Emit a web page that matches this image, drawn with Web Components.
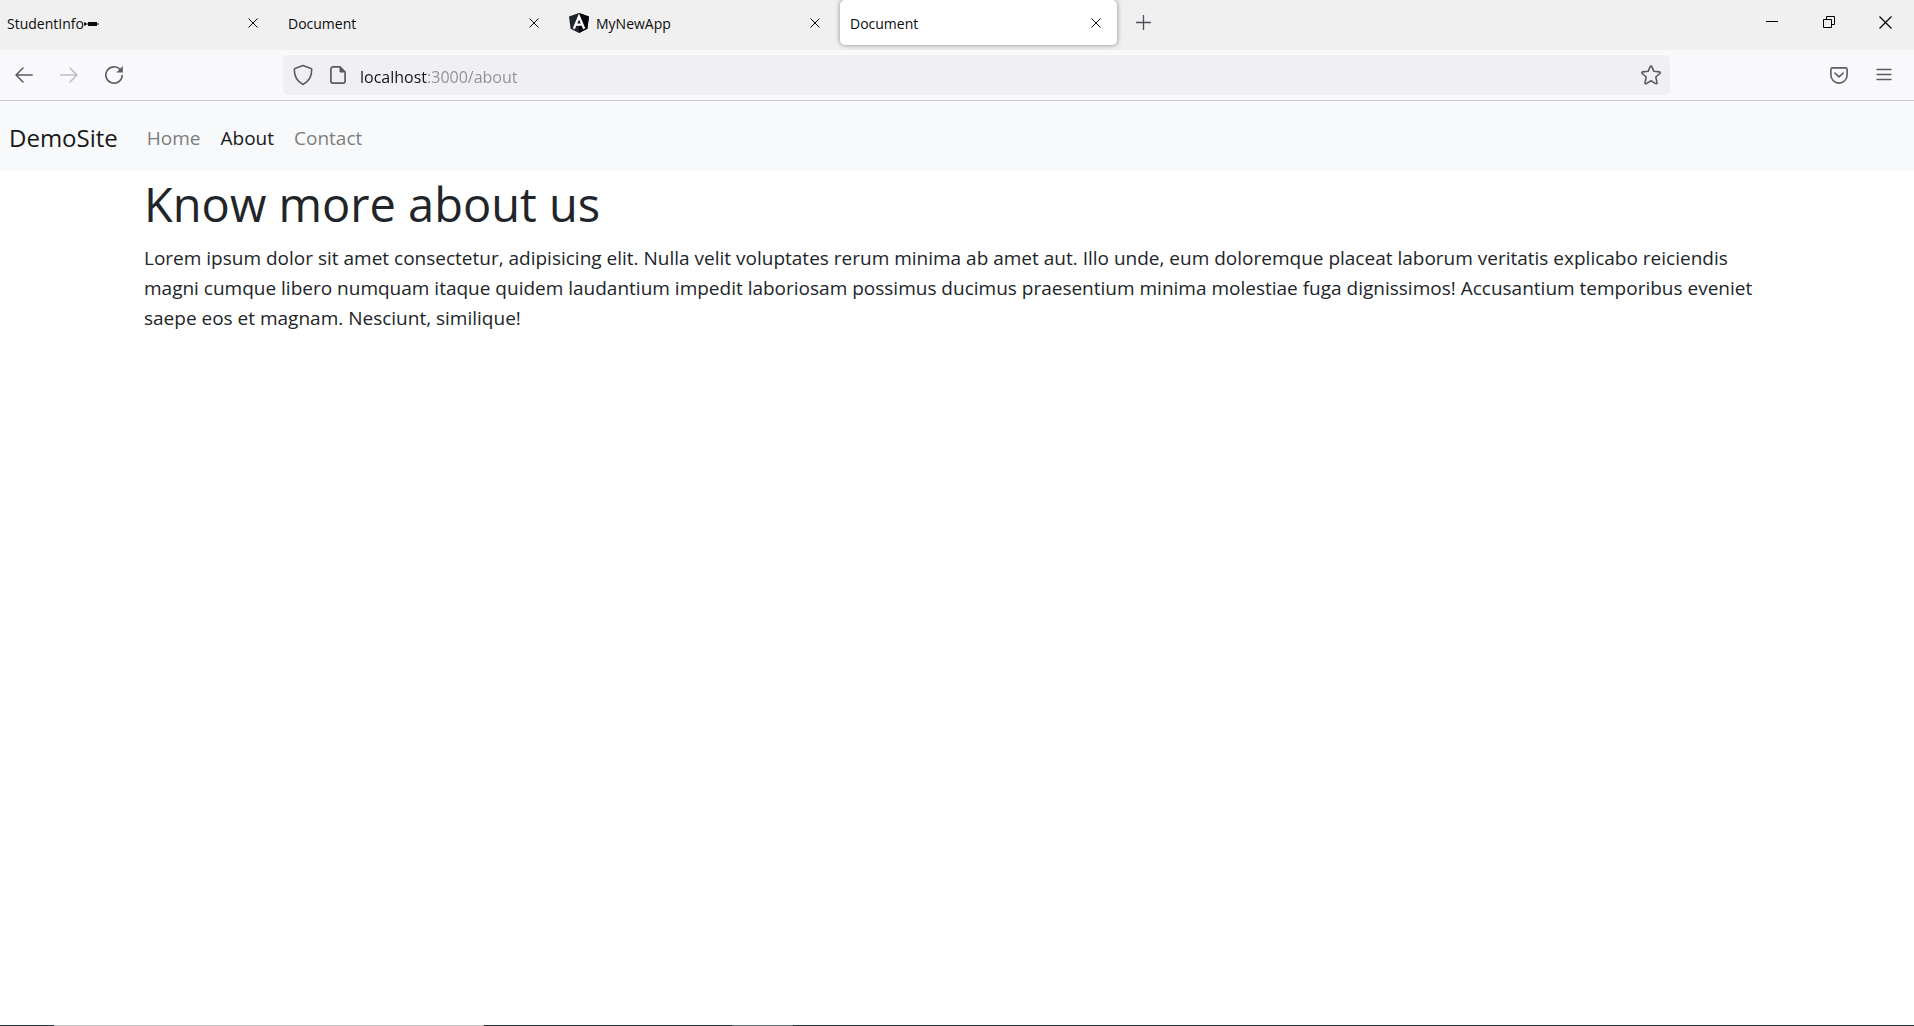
<!DOCTYPE html>
<html lang="en">
<head>
<meta charset="utf-8">
<meta name="viewport" content="width=device-width, initial-scale=1">
<title>Document</title>
<style>
  html, body { margin: 0; }
  body { font-family: "Open Sans", "Noto Sans", sans-serif; background: #fff; color: #212529; }
</style>
</head>
<body>
<browser-window></browser-window>

<script>
const define = (name, html) => {
  const template = document.createElement('template');
  template.innerHTML = html;
  customElements.define(name, class extends HTMLElement {
    constructor() {
      super();
      this.attachShadow({ mode: 'open' }).append(template.content.cloneNode(true));
    }
  });
};

const reset = `
  :host, * { box-sizing: border-box; }
  button { border: 0; padding: 0; margin: 0; background: none; font: inherit; color: inherit;
    display: flex; align-items: center; justify-content: center; }
  svg { display: block; fill: none; stroke: currentColor; flex: none; }
  a { color: inherit; text-decoration: none; }
`;

define('browser-tab', `
  <style>${reset}
    :host { display: flex; align-items: center; flex: 0 1 277px; min-width: 0; height: 45px; padding: 0 11px 0 10px;
      font-size: 14px; line-height: 20px; color: #0c0c0d; border-radius: 5px; }
    :host([first]) { flex-basis: 274px; padding-left: 7px; }
    :host([active]) { background: #fff; box-shadow: 0 0 5px rgba(0,0,0,.45); }
    .label { flex: 1; min-width: 0; display: flex; align-items: center; white-space: nowrap; padding-top: 2px; }
    button { width: 20px; height: 20px; }
  </style>
  <slot name="icon"></slot>
  <span class="label"><slot></slot></span>
  <button aria-label="Close tab"><svg width="10" height="10" viewBox="0 0 10 10" stroke-width="1"><path d="M.5.5l9 9M9.5.5l-9 9"/></svg></button>
`);

define('tab-strip', `
  <style>${reset}
    :host { display: flex; height: 50px; background: #f0f0f0; color: #111; align-items: flex-start; }
    .tabs { display: flex; gap: 4px; flex: 1; min-width: 0; }
    .plus { width: 44px; height: 45px; color: #4f4f58; }
    .controls { display: flex; }
    .controls button { width: 57px; height: 44px; color: #000; }
    .favicon { margin-right: 7px; }
  </style>
  <div class="tabs">
    <browser-tab first>StudentInfo<svg width="16" height="6" viewBox="0 0 16 6" aria-hidden="true"><path d="M0 3h15" stroke-width="1"/><path d="M1 1.5v3" stroke-width="2"/><path d="M4 3h9" stroke-width="4"/></svg></browser-tab>
    <browser-tab>Document</browser-tab>
    <browser-tab><svg slot="icon" class="favicon" width="20" height="20" viewBox="0 0 20 20" stroke="none"><path fill="#20242d" stroke="none" d="M10 0l10 3.4-1.6 12.3L10 20l-8.400-4.300L0 3.400z"/><path fill="#05070d" stroke="none" d="M10 0l10 3.400-1.600 12.300L10 20z"/><path fill="none" stroke="#fff" stroke-width="2.300" d="M4.800 15.800L10 3.500l5.200 12.300M7 11.600h6"/></svg>MyNewApp</browser-tab>
    <browser-tab active>Document</browser-tab>
    <button class="plus" aria-label="Open a new tab"><svg width="15" height="15" viewBox="0 0 15 15" stroke-width="1.300"><path d="M7.500 0v15M0 7.500h15"/></svg></button>
  </div>
  <div class="controls">
    <button aria-label="Minimize"><svg width="12" height="12" viewBox="0 0 12 12"><path d="M0 5.500h12"/></svg></button>
    <button aria-label="Restore"><svg width="12" height="12" viewBox="0 0 12 12"><path d="M.5 3.500h8v8h-8zM3.500 3.500v-3h8v8h-3"/></svg></button>
    <button aria-label="Close"><svg width="13" height="13" viewBox="0 0 13 13" stroke-width="1.200"><path d="M.5.5l12 12M12.500.5l-12 12"/></svg></button>
  </div>
`);

define('address-bar', `
  <style>${reset}
    :host { display: flex; align-items: center; height: 40px; border-radius: 5px; background: #f0eff4;
      padding: 0 9px 0 10px; color: #5b5b66; }
    .page { margin: 0 14px 0 17px; }
    label { display: flex; flex: 1; min-width: 0; }
    /* The host name is dark and the rest of the address is dimmed. */
    input { flex: 1; min-width: 0; height: 32px; padding: 3px 0 0; border: 0; outline: 0; font: 16px/24px "Open Sans", sans-serif;
      color: #15141a; -webkit-text-fill-color: transparent;
      background: linear-gradient(90deg, #15141a 68px, #8f8e96 68px); -webkit-background-clip: text; background-clip: text; }
  </style>
  <button aria-label="Tracking protection"><svg width="20" height="22" viewBox="0 0 20 22" stroke-width="1.600" stroke-linejoin="round"><path d="M10 1.500l8 3.100c.5.200.7.600.7 1.100C18.700 12 16 17.300 10 20.500 4 17.300 1.300 12 1.300 5.700c0-.5.2-.9.7-1.100z"/></svg></button>
  <button class="page" aria-label="Site information"><svg width="16" height="18" viewBox="0 0 16 18" stroke-width="1.700" stroke-linejoin="round"><path d="M10 .9H3C1.800.9.9 1.800.9 3v12c0 1.200.9 2.100 2.100 2.100h10c1.200 0 2.100-.9 2.100-2.100V6z"/><path d="M10 1v5h5z" fill="currentColor" stroke-width="1"/></svg></button>
  <label><input type="text" aria-label="Address" value="localhost:3000/about" spellcheck="false"></label>
  <button aria-label="Bookmark this page"><svg width="20" height="20" viewBox="0 0 20 20" stroke-width="1.600" stroke-linejoin="round"><path d="M9.200 1.600c.3-.7 1.300-.7 1.600 0l2.100 4.700 5.400.6c.8.100 1.100 1.100.5 1.600l-4 3.500 1.200 5.600c.2.800-.6 1.400-1.300 1L10 15.800l-4.700 2.800c-.7.400-1.500-.2-1.300-1L5.200 12l-4-3.500c-.6-.5-.3-1.500.5-1.600l5.400-.6z"/></svg></button>
`);

define('nav-toolbar', `
  <style>${reset}
    :host { display: flex; align-items: center; gap: 5px; height: 51px; padding: 0 10px 0 4px;
      background: #f9f9fb; border-bottom: 1px solid #cccccf; color: #5b5b66; }
    button { width: 40px; height: 40px; flex: none; }
    button:disabled { color: #bdbdc1; }
    address-bar { flex: 1; min-width: 0; margin: 0 144px; }
    @media (max-width: 1200px) { address-bar { margin: 0 20px; } }
  </style>
  <button aria-label="Back"><svg width="18" height="16" viewBox="0 0 18 16" stroke-width="1.500" stroke-linecap="round" stroke-linejoin="round"><path d="M17.200 8H1M8 1L1 8l7 7"/></svg></button>
  <button aria-label="Forward" disabled><svg width="18" height="16" viewBox="0 0 18 16" stroke-width="1.500" stroke-linecap="round" stroke-linejoin="round"><path d="M.8 8H17M10 1l7 7-7 7"/></svg></button>
  <button aria-label="Reload"><svg width="18" height="18" viewBox="0 0 18 18" stroke-width="1.600" stroke-linecap="round"><path d="M17.200 9.500A8.200 8.200 0 1 1 15 3.400"/><path d="M17.600.8v5.400h-5.400z" fill="currentColor" stroke-width=".6" stroke-linejoin="round"/></svg></button>
  <address-bar></address-bar>
  <button aria-label="Save to Pocket"><svg width="18" height="17" viewBox="0 0 18 17" stroke-width="1.600" stroke-linecap="round" stroke-linejoin="round"><path d="M2.500.9h13c.9 0 1.600.7 1.600 1.600V8a8.100 8.100 0 0 1-16.200 0V2.500C.9 1.600 1.600.9 2.500.9z"/><path d="M4.800 6L9 9.900 13.200 6"/></svg></button>
  <button aria-label="Open application menu"><svg width="16" height="14" viewBox="0 0 16 14" stroke-width="1.400" stroke-linecap="round"><path d="M1 1.500h14M1 6.500h14M1 11.500h14"/></svg></button>
`);

define('site-nav', `
  <style>${reset}
    :host { display: block; background: #f8f9fb; }
    nav { display: flex; align-items: center; height: 70px; padding: 3px 9px 0; gap: 29px; }
    .brand { font-size: 24px; line-height: 36px; color: #17181a; }
    ul { display: flex; gap: 20px; list-style: none; margin: 0; padding: 0; font-size: 19px; line-height: 30px; color: #7c7d7e; }
    a[aria-current] { color: #17181a; }
  </style>
  <nav>
    <a class="brand" href="#">DemoSite</a>
    <ul>
      <li><a href="#home">Home</a></li>
      <li><a href="#about" aria-current="page">About</a></li>
      <li><a href="#contact">Contact</a></li>
    </ul>
  </nav>
`);

define('about-page', `
  <style>${reset}
    :host { display: block; width: 100%; max-width: 1650px; margin: 0 auto; padding: 3px 12px 0; }
    h1 { margin: 0 0 9px; font-size: 47px; line-height: 60px; font-weight: 400; }
    p { margin: 0; font-size: 19px; line-height: 30px; }
  </style>
  <h1>Know more about us</h1>
  <p>Lorem ipsum dolor sit amet consectetur, adipisicing elit. Nulla velit voluptates rerum minima ab amet aut. Illo unde, eum doloremque placeat laborum veritatis explicabo reiciendis magni cumque libero numquam itaque quidem laudantium impedit laboriosam possimus ducimus praesentium minima molestiae fuga dignissimos! Accusantium temporibus eveniet saepe eos et magnam. Nesciunt, similique!</p>
`);

define('taskbar-edge', `
  <style>
    :host { display: block; height: 1px;
      background: linear-gradient(90deg, #2b3339 54px, #c1c1c1 54px 484px, #2b3339 484px 732px, #687175 732px 793px, #2b3339 793px); }
  </style>
`);

define('browser-window', `
  <style>${reset}
    :host { display: flex; flex-direction: column; min-height: 100vh; }
    main { flex: 1; }
  </style>
  <tab-strip></tab-strip>
  <nav-toolbar></nav-toolbar>
  <site-nav></site-nav>
  <main><about-page></about-page></main>
  <taskbar-edge></taskbar-edge>
`);
</script>
</body>
</html>
